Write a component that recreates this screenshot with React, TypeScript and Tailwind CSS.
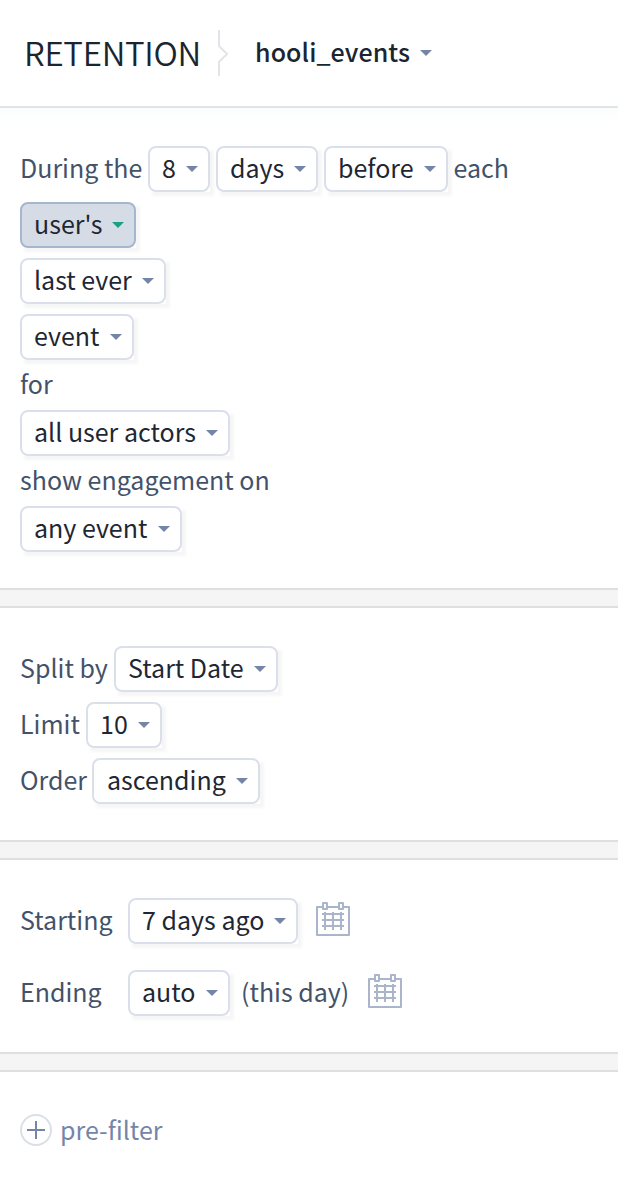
import type { ReactNode } from "react";

function Caret({ className = "fill-[#7585a8]" }: { className?: string }) {
  return (
    <svg width="12" height="6" viewBox="0 0 12 6" className={`shrink-0 ${className}`}>
      <path d="M0 0H12L6 6Z" />
    </svg>
  );
}

function Pill({ width, active = false, children }: { width: string; active?: boolean; children: ReactNode }) {
  return (
    <div className={`h-[46px] shrink-0 bg-white shadow-[4px_4px_3px_rgba(0,0,0,0.04)] ${width}`}>
      <button
        type="button"
        className={`flex h-full w-full items-center justify-between rounded-lg border-2 pr-[10px] pl-3 text-[#1e2733] ${
          active ? "border-[#a5b6cf] bg-[#d5dce5]" : "border-[#dadfea] bg-white"
        }`}
      >
        <span className="-mt-[3px] pb-px whitespace-nowrap">{children}</span>
        <Caret className={active ? "fill-[#16a085]" : "fill-[#7585a8]"} />
      </button>
    </div>
  );
}

function Row({ children }: { children: ReactNode }) {
  return <div className="flex h-14 items-center">{children}</div>;
}

function Label({ width = "", children }: { width?: string; children: ReactNode }) {
  return <span className={`shrink-0 pb-1 whitespace-nowrap ${width}`}>{children}</span>;
}

function Line({ children }: { children: ReactNode }) {
  return <p className="h-10 leading-9">{children}</p>;
}

function Divider() {
  return <div className="h-5 border-y-2 border-[#dfdfdf] bg-[#f5f5f5]" />;
}

function CalendarIcon() {
  return (
    <svg width="34" height="34" viewBox="0 0 34 34" fill="none" stroke="#aab4cb" strokeWidth="2" className="shrink-0">
      <path d="M6 5H1V33H33V5H28M12 5H22" strokeLinejoin="round" />
      <path d="M7 1H11V7H7ZM23 1H27V7H23Z" strokeLinejoin="round" />
      <path d="M6 12H28M6 18H28M6 24H28M9 10V28M17 10V28M25 10V28" />
    </svg>
  );
}

export default function App() {
  return (
    <div className="h-[1192px] w-[618px] overflow-hidden bg-white font-['Noto_Sans_CJK_SC','Noto_Sans',sans-serif] text-[25px] leading-10 text-[#43526a]">
      <header className="flex h-[108px] items-center border-b-2 border-[#e1e5ea] pl-6 text-[#1b2530]">
        <h1 className="w-[194px] pb-[2px] text-[33px] leading-10 font-[350] tracking-[-0.3px]">RETENTION</h1>
        <svg width="10" height="46" viewBox="0 0 10 46" fill="none" stroke="#e1e5ea" strokeWidth="2">
          <path d="M1 0V16L9 24L1 32V46" />
        </svg>
        <button type="button" className="ml-[27px] flex h-10 w-[177px] items-center justify-between font-medium tracking-[0.1px]">
          <span className="pb-1">hooli_events</span>
          <Caret />
        </button>
      </header>
      <section className="bg-linear-to-b from-[#fbfcfc] to-white to-[16px] px-5 pt-[33px] pb-[31px]">
        <Row>
          <Label width="w-32">During the</Label>
          <Pill width="w-[62px]">8</Pill>
          <div className="w-[6px]" />
          <Pill width="w-[102px]">days</Pill>
          <div className="w-[6px]" />
          <Pill width="w-[124px]">before</Pill>
          <div className="w-[5.5px]" />
          <Label>each</Label>
        </Row>
        <Row><Pill width="w-[116px]" active>user's</Pill></Row>
        <Row><Pill width="w-[146px]">last ever</Pill></Row>
        <Row><Pill width="w-[114px]">event</Pill></Row>
        <Line>for</Line>
        <Row><Pill width="w-[210px]">all user actors</Pill></Row>
        <Line>show engagement on</Line>
        <Row><Pill width="w-[162px]">any event</Pill></Row>
      </section>
      <Divider />
      <section className="px-5 pt-[33px] pb-[31px]">
        <Row><Label width="w-[94px]">Split by</Label><Pill width="w-[164px]">Start Date</Pill></Row>
        <Row><Label width="w-[66px]">Limit</Label><Pill width="w-[76px]">10</Pill></Row>
        <Row><Label width="w-[72px]">Order</Label><Pill width="w-[168px]"><span className="pl-px">ascending</span></Pill></Row>
      </section>
      <Divider />
      <section className="flex flex-col gap-4 px-5 pt-[33px] pb-[31px]">
        <Row>
          <Label width="w-[108px]">Starting</Label>
          <Pill width="w-[170px]">7 days ago</Pill>
          <div className="mb-1 ml-[18px]"><CalendarIcon /></div>
        </Row>
        <Row>
          <Label width="w-[108px]">Ending</Label>
          <Pill width="w-[102px]">auto</Pill>
          <Label width="w-[138px] pl-[11px]">(this day)</Label>
          <div className="mb-1"><CalendarIcon /></div>
        </Row>
      </section>
      <Divider />
      <section className="flex items-center gap-2 px-5 pt-[38px] text-[#7585a8]">
        <svg width="32" height="32" viewBox="0 0 32 32" fill="none" strokeWidth="2">
          <circle cx="16" cy="16" r="15" stroke="#dadfe8" />
          <path d="M7 16H25M16 7V25" stroke="#7585a8" />
        </svg>
        <span className="pb-[2px] leading-[38px]">pre-filter</span>
      </section>
    </div>
  );
}
